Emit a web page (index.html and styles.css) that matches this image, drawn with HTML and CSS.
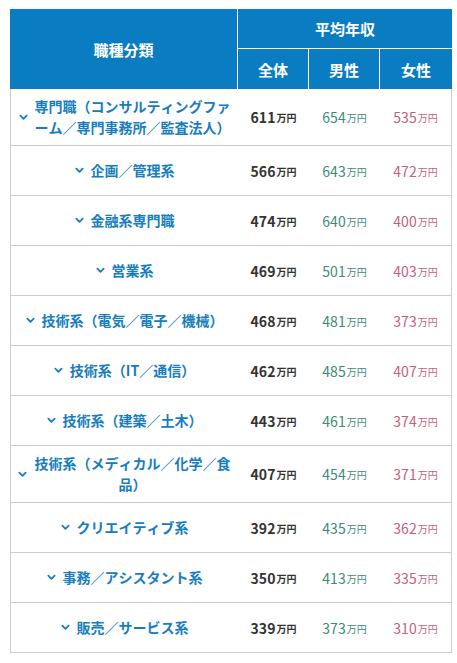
FILE: index.html
```html
<!DOCTYPE html>
<html lang="ja">
<head>
<meta charset="utf-8">
<title>職種分類別 平均年収</title>
<link rel="stylesheet" href="styles.css">
</head>
<body>
<div class="salary-table">
  <div class="thead">
    <div class="th th-type">職種分類</div>
    <div class="th th-avg">平均年収</div>
    <div class="th th-sub th-div">全体</div>
    <div class="th th-sub th-div">男性</div>
    <div class="th th-sub">女性</div>
  </div>

  <div class="row">
    <div class="name"><svg class="chev" viewBox="0 0 10 7"><polyline points="1.5,1.5 5,5 8.5,1.5"/></svg><span class="label">専門職（コンサルティングファ<br>ーム／専門事務所／監査法人）</span></div>
    <div class="val all">611<small>万円</small></div>
    <div class="val male">654<small>万円</small></div>
    <div class="val female">535<small>万円</small></div>
  </div>
  <div class="row">
    <div class="name"><svg class="chev" viewBox="0 0 10 7"><polyline points="1.5,1.5 5,5 8.5,1.5"/></svg><span class="label">企画／管理系</span></div>
    <div class="val all">566<small>万円</small></div>
    <div class="val male">643<small>万円</small></div>
    <div class="val female">472<small>万円</small></div>
  </div>
  <div class="row">
    <div class="name"><svg class="chev" viewBox="0 0 10 7"><polyline points="1.5,1.5 5,5 8.5,1.5"/></svg><span class="label">金融系専門職</span></div>
    <div class="val all">474<small>万円</small></div>
    <div class="val male">640<small>万円</small></div>
    <div class="val female">400<small>万円</small></div>
  </div>
  <div class="row">
    <div class="name"><svg class="chev" viewBox="0 0 10 7"><polyline points="1.5,1.5 5,5 8.5,1.5"/></svg><span class="label">営業系</span></div>
    <div class="val all">469<small>万円</small></div>
    <div class="val male">501<small>万円</small></div>
    <div class="val female">403<small>万円</small></div>
  </div>
  <div class="row">
    <div class="name"><svg class="chev" viewBox="0 0 10 7"><polyline points="1.5,1.5 5,5 8.5,1.5"/></svg><span class="label">技術系（電気／電子／機械）</span></div>
    <div class="val all">468<small>万円</small></div>
    <div class="val male">481<small>万円</small></div>
    <div class="val female">373<small>万円</small></div>
  </div>
  <div class="row">
    <div class="name"><svg class="chev" viewBox="0 0 10 7"><polyline points="1.5,1.5 5,5 8.5,1.5"/></svg><span class="label">技術系（IT／通信）</span></div>
    <div class="val all">462<small>万円</small></div>
    <div class="val male">485<small>万円</small></div>
    <div class="val female">407<small>万円</small></div>
  </div>
  <div class="row">
    <div class="name"><svg class="chev" viewBox="0 0 10 7"><polyline points="1.5,1.5 5,5 8.5,1.5"/></svg><span class="label">技術系（建築／土木）</span></div>
    <div class="val all">443<small>万円</small></div>
    <div class="val male">461<small>万円</small></div>
    <div class="val female">374<small>万円</small></div>
  </div>
  <div class="row">
    <div class="name"><svg class="chev" viewBox="0 0 10 7"><polyline points="1.5,1.5 5,5 8.5,1.5"/></svg><span class="label">技術系（メディカル／化学／食品）</span></div>
    <div class="val all">407<small>万円</small></div>
    <div class="val male">454<small>万円</small></div>
    <div class="val female">371<small>万円</small></div>
  </div>
  <div class="row">
    <div class="name"><svg class="chev" viewBox="0 0 10 7"><polyline points="1.5,1.5 5,5 8.5,1.5"/></svg><span class="label">クリエイティブ系</span></div>
    <div class="val all">392<small>万円</small></div>
    <div class="val male">435<small>万円</small></div>
    <div class="val female">362<small>万円</small></div>
  </div>
  <div class="row">
    <div class="name"><svg class="chev" viewBox="0 0 10 7"><polyline points="1.5,1.5 5,5 8.5,1.5"/></svg><span class="label">事務／アシスタント系</span></div>
    <div class="val all">350<small>万円</small></div>
    <div class="val male">413<small>万円</small></div>
    <div class="val female">335<small>万円</small></div>
  </div>
  <div class="row">
    <div class="name"><svg class="chev" viewBox="0 0 10 7"><polyline points="1.5,1.5 5,5 8.5,1.5"/></svg><span class="label">販売／サービス系</span></div>
    <div class="val all">339<small>万円</small></div>
    <div class="val male">373<small>万円</small></div>
    <div class="val female">310<small>万円</small></div>
  </div>
</div>
</body>
</html>
```
FILE: styles.css
```css
* { box-sizing: border-box; }

html, body {
  margin: 0;
  padding: 0;
  background: #ffffff;
}

body {
  font-family: "Noto Sans CJK JP", "Noto Sans", sans-serif;
  font-size: 14px;
  color: #333333;
  font-kerning: none;
  text-spacing-trim: space-all;
}

.salary-table {
  width: 442px;
  margin: 9px 0 0 10px;
}

.thead {
  display: grid;
  grid-template-columns: 228px 71px 71px 72px;
  grid-template-rows: 40px 40px;
  background: #0a7dc2;
  color: #ffffff;
}

.th {
  display: flex;
  align-items: center;
  justify-content: center;
  font-weight: 700;
  font-size: 15px;
  line-height: 1;
}

.th-type {
  grid-row: 1 / span 2;
  border-right: 1px solid #ffffff;
}

.th-avg {
  grid-column: 2 / span 3;
  border-bottom: 1px solid #ffffff;
}

.th-div {
  border-right: 1px solid #ffffff;
}

.row {
  display: grid;
  grid-template-columns: 227px 71px 71px 71px;
  min-height: 50px;
  border-left: 1px solid #cccccc;
  border-right: 1px solid #cccccc;
  border-bottom: 1px solid #cccccc;
}

.name {
  display: flex;
  align-items: center;
  justify-content: center;
  gap: 7px;
  padding: 7px 7px;
  color: #177dbf;
  font-weight: 700;
  font-size: 14px;
  line-height: 21px;
}

.label {
  text-align: center;
  line-break: loose;
}

.chev {
  flex: none;
  width: 9px;
  height: 7px;
  fill: none;
  stroke: #177dbf;
  stroke-width: 2;
  stroke-linecap: round;
  stroke-linejoin: round;
}

.val {
  display: flex;
  align-items: center;
  justify-content: center;
  font-size: 14px;
  line-height: 21px;
  padding-top: 1px;
}

.val small {
  font-size: 10px;
  margin-left: 1px;
}

.all {
  font-weight: 700;
  color: #333333;
}

.male {
  color: #3c8a78;
}

.female {
  color: #c45f7b;
}
```
